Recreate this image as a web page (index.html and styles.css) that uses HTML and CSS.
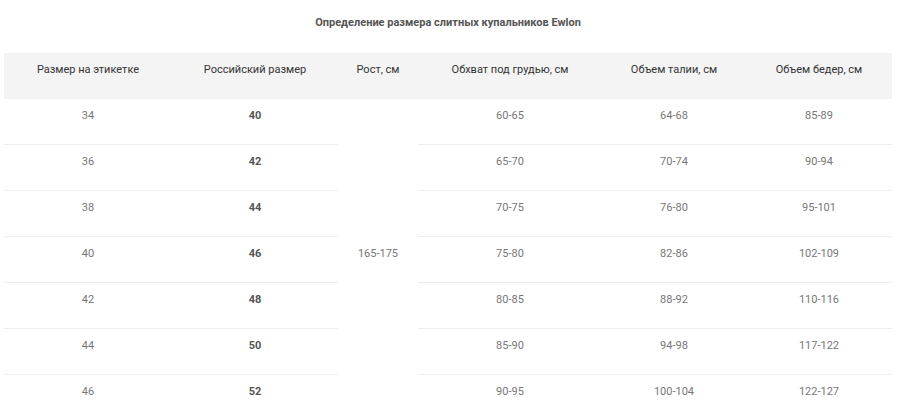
FILE: index.html
```html
<!DOCTYPE html>
<html lang="ru">
<head>
<meta charset="utf-8">
<link rel="stylesheet" href="styles.css">
</head>
<body>
<div class="page">
  <h3 class="title">Определение размера слитных купальников Ewlon</h3>
  <table class="sizes">
    <colgroup>
      <col class="c1"><col class="c2"><col class="c3"><col class="c4"><col class="c5"><col class="c6">
    </colgroup>
    <thead>
      <tr>
        <th>Размер на этикетке</th>
        <th>Российский размер</th>
        <th>Рост, см</th>
        <th>Обхват под грудью, см</th>
        <th>Объем талии, см</th>
        <th>Объем бедер, см</th>
      </tr>
    </thead>
    <tbody>
      <tr><td>34</td><td class="ru">40</td><td class="height" rowspan="7">165-175</td><td>60-65</td><td>64-68</td><td>85-89</td></tr>
      <tr><td>36</td><td class="ru">42</td><td>65-70</td><td>70-74</td><td>90-94</td></tr>
      <tr><td>38</td><td class="ru">44</td><td>70-75</td><td>76-80</td><td>95-101</td></tr>
      <tr><td>40</td><td class="ru">46</td><td>75-80</td><td>82-86</td><td>102-109</td></tr>
      <tr><td>42</td><td class="ru">48</td><td>80-85</td><td>88-92</td><td>110-116</td></tr>
      <tr><td>44</td><td class="ru">50</td><td>85-90</td><td>94-98</td><td>117-122</td></tr>
      <tr><td>46</td><td class="ru">52</td><td>90-95</td><td>100-104</td><td>122-127</td></tr>
    </tbody>
  </table>
</div>
</body>
</html>
```
FILE: styles.css
```css
html, body {
  margin: 0;
  padding: 0;
  background: #fff;
}
body {
  font-family: Roboto, "Liberation Sans", Arial, sans-serif;
  font-size: 11px;
  color: #333;
}
.page {
  padding: 14px 8px 0 4px;
}
.title {
  margin: 0 0 21px;
  text-align: center;
  font-size: 11px;
  font-weight: 700;
  line-height: 18px;
  color: #555;
}
.sizes {
  width: 888px;
  border-collapse: collapse;
  table-layout: fixed;
}
.c1 { width: 168px; }
.c2 { width: 166px; }
.c3 { width: 80px; }
.c4 { width: 184px; }
.c5 { width: 144px; }
.c6 { width: 146px; }
.sizes th,
.sizes td {
  padding: 8px 6px 19px;
  line-height: 18px;
  text-align: center;
  vertical-align: top;
}
.sizes th {
  padding-bottom: 20px;
  background: #f4f4f4;
  font-weight: 400;
  color: #333;
}
.sizes td {
  color: #777;
}
.sizes tbody tr + tr td {
  border-top: 1px solid #eeeeee;
}
.sizes td.ru {
  font-weight: 700;
  color: #555;
}
.sizes td.height {
  vertical-align: middle;
}
```
